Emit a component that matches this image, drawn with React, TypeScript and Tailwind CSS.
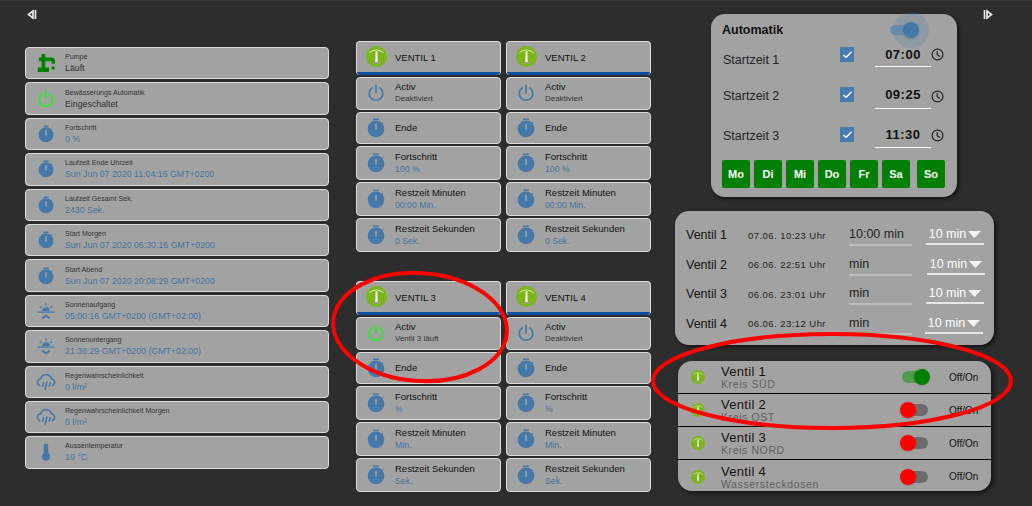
import type { ReactNode } from "react";

const BLUE = "#4378a8";

const TimerIcon = ({ size = 18 }: { size?: number }) => (
    <svg width={size} height={size} viewBox="0 0 24 24" fill={BLUE}>
        <path d="M8.500 0.500h7v2h-7z" />
        <path d="M19.200 7.600l1.400-1.400-1.500-1.500-1.400 1.400z" />
        <circle cx="12" cy="13" r="10" />
        <rect x="11" y="7" width="2" height="7" fill="#a2a2a2" />
    </svg>
);

const PowerIcon = ({ color = BLUE }: { color?: string }) => (
    <svg width="18" height="18" viewBox="0 0 24 24" fill="none" stroke={color} strokeWidth="2.200" strokeLinecap="round">
        <path d="M12 2v10" />
        <path d="M7 5.200a9 9 0 1 0 10 0" />
    </svg>
);

const PumpIcon = () => (
    <svg width="18" height="18" viewBox="0 0 24 24" fill="#008000">
        <path d="M6 0h5v4.500h8c3 0 5 2 5 4.500v4h-4.500v-3.500H11V18h5v6H1v-6h5V9.500H2.500v-5H6z" />
        <circle cx="21.500" cy="18.500" r="2.200" />
    </svg>
);

const SunIcon = ({ up }: { up: boolean }) => (
    <svg width="18" height="18" viewBox="0 0 24 24" fill="none" stroke={BLUE} strokeWidth="2">
        <path d="M7 12a5 5 0 0 1 10 0z" fill={BLUE} stroke="none" />
        <path d="M0.500 13.500h23" strokeWidth="1.800" />
        <path d="M12 1.500v3M3.500 6l3 2M20.500 6l-3 2" />
        <path d={up ? "M7 22l5-4 5 4" : "M7 18l5 4 5-4"} strokeWidth="2.400" />
    </svg>
);

const RainIcon = () => (
    <svg width="20" height="20" viewBox="0 0 24 24" fill="none" stroke={BLUE} strokeWidth="1.900" strokeLinecap="round">
        <path d="M4.500 16.500A4.500 4.500 0 0 1 5.500 8a7 7 0 0 1 13.200 0 4.500 4.500 0 0 1 1 8.500" />
        <path d="M9 13l-1 4M13 12l-2 9M17 13l-1 4" />
    </svg>
);

const ThermoIcon = () => (
    <svg width="18" height="18" viewBox="0 0 24 24" fill={BLUE}>
        <rect x="9" y="0.500" width="6" height="16" rx="3" />
        <circle cx="12" cy="18" r="5.500" />
    </svg>
);

// green sprinkler disc used for every valve
const ValveIcon = ({ size = 21 }: { size?: number }) => (
    <svg width={size} height={size} viewBox="0 0 24 24">
        <circle cx="12" cy="12" r="12" fill="#7cb518" />
        <path d="M11 6h2l.5 13h-3z" fill="#f4f4f4" />
        <path d="M4 7.500Q12 1.500 20 7.500" fill="none" stroke="#e8f2d0" strokeWidth="1" />
        <path d="M7.500 20l9-2M7.500 18l9 2" stroke="#9aa08c" strokeWidth="1" />
    </svg>
);

const ClockIcon = () => (
    <svg width="13" height="13" viewBox="0 0 24 24" fill="none" stroke="#222" strokeWidth="2.200">
        <circle cx="12" cy="12" r="10" />
        <path d="M11.500 6v6.500l5 3" />
    </svg>
);

const NavArrow = ({ right }: { right?: boolean }) => (
    <svg width="11" height="11" viewBox="0 0 11 11" fill="none" stroke="#e8e8e8" strokeWidth="1.700" className={right ? "rotate-180" : ""}>
        <path d="M9.500 1v9M7 2v7L2.500 5.500z" />
    </svg>
);

const CheckBox = () => (
    <div className="w-[14px] h-[15px] rounded-[1px] bg-[#4a7bae] flex items-center justify-center">
        <svg width="11" height="11" viewBox="0 0 24 24" fill="none" stroke="#fff" strokeWidth="3">
            <path d="M3 13l6 5L21 6" />
        </svg>
    </div>
);

type InfoRow = { icon: ReactNode; title: string; value: string; dark?: boolean };

const INFO_ROWS: InfoRow[] = [
    { icon: <PumpIcon />, title: "Pumpe", value: "Läuft", dark: true },
    { icon: <PowerIcon color="#22ee22" />, title: "Bewässerungs Automatik", value: "Eingeschaltet", dark: true },
    { icon: <TimerIcon />, title: "Fortschritt", value: "0 %" },
    { icon: <TimerIcon />, title: "Laufzeit Ende Uhrzeit", value: "Sun Jun 07 2020 11:04:16 GMT+0200" },
    { icon: <TimerIcon />, title: "Laufzeit Gesamt Sek.", value: "2430 Sek." },
    { icon: <TimerIcon />, title: "Start Morgen", value: "Sun Jun 07 2020 06:30:16 GMT+0200" },
    { icon: <TimerIcon />, title: "Start Abend", value: "Sun Jun 07 2020 20:08:29 GMT+0200" },
    { icon: <SunIcon up />, title: "Sonnenaufgang", value: "05:00:16 GMT+0200 (GMT+02:00)" },
    { icon: <SunIcon up={false} />, title: "Sonnenuntergang", value: "21:38:29 GMT+0200 (GMT+02:00)" },
    { icon: <RainIcon />, title: "Regenwahrscheinlichkeit", value: "0 l/m²" },
    { icon: <RainIcon />, title: "Regenwahrscheinlichkeit Morgen", value: "0 l/m²" },
    { icon: <ThermoIcon />, title: "Aussentemperatur", value: "19 °C" },
];

const Card = ({ className, children }: { className: string; children: ReactNode }) => (
    <div className={`bg-[#a2a2a2] border border-[#dcdcdc] rounded-[4px] flex items-center overflow-hidden ${className}`}>
        {children}
    </div>
);

const InfoCard = ({ row }: { row: InfoRow }) => (
    <Card className="h-[32.400px] shrink-0">
        <div className="w-[39px] flex justify-center shrink-0">{row.icon}</div>
        <div className="flex flex-col leading-[11px]">
            <span className="text-[7.100px] text-[#333]">{row.title}</span>
            <span className={`text-[8.800px] ${row.dark ? "text-[#2e2e2e]" : "text-[#44729f]"}`}>{row.value}</span>
        </div>
    </Card>
);

const ValveRow = ({ icon, title, sub, subDark, h }: { icon: ReactNode; title: string; sub?: string; subDark?: boolean; h: string }) => (
    <Card className={h}>
        <div className="w-[38px] flex justify-center shrink-0">{icon}</div>
        <div className="flex flex-col leading-[12px]">
            <span className="text-[9.500px] text-[#111]">{title}</span>
            {sub !== undefined && (
                <span className={subDark ? "text-[8px] text-[#333]" : "text-[8.700px] text-[#44729f]"}>{sub}</span>
            )}
        </div>
    </Card>
);

const ValveCol = ({ name, activ, running, progress, minutes, seconds }: { name: string; activ: string; running?: boolean; progress: string; minutes: string; seconds: string }) => (
    <div className="w-[145px] flex flex-col gap-[2px]">
        <Card className="h-[33.500px] relative border-b-0">
            <div className="w-[38px] flex justify-center shrink-0 mb-[3px]"><ValveIcon /></div>
            <span className="text-[9.500px] text-[#111]">{name}</span>
            <div className="absolute left-0 right-0 bottom-0 h-[3px] bg-[#0b4fa0]" />
        </Card>
        <ValveRow h="h-[33px]" icon={<PowerIcon color={running ? "#22ee22" : BLUE} />} title="Activ" sub={activ} subDark />
        <ValveRow h="h-[32.500px]" icon={<TimerIcon size={20} />} title="Ende" />
        <ValveRow h="h-[34px]" icon={<TimerIcon size={20} />} title="Fortschritt" sub={progress} />
        <ValveRow h="h-[34px]" icon={<TimerIcon size={20} />} title="Restzeit Minuten" sub={minutes} />
        <ValveRow h="h-[34px]" icon={<TimerIcon size={20} />} title="Restzeit Sekunden" sub={seconds} />
    </div>
);

const START_TIMES = [
    { label: "Startzeit 1", time: "07:00", row: "h-[40px]", text: "mt-[7px]", check: "mt-[1px]", clock: "mt-[2px]", field: "h-[21px] pb-[3px]" },
    { label: "Startzeit 2", time: "09:25", row: "h-[40px]", text: "mt-[3px]", check: "mt-[1px]", clock: "mt-[4px]", field: "h-[23px] pb-[4px]" },
    { label: "Startzeit 3", time: "11:30", row: "h-[34px]", text: "mt-[3px]", check: "mt-[1px]", clock: "mt-[3px]", field: "h-[22px] pb-[5px]" },
];

const DAYS = ["Mo", "Di", "Mi", "Do", "Fr", "Sa"];

const AutomatikPanel = () => (
    <div className="w-[247px] h-[183px] bg-[#a2a2a2] rounded-[14px] shadow-[2px_2px_4px_rgba(0,0,0,0.6)] px-[11px] pt-[8px] relative">
        <div className="flex items-center justify-between h-[16px]">
            <span className="text-[12.500px] font-bold text-[#111]">Automatik</span>
            <div className="relative w-[29px] h-[10px] mr-[27px] rounded-full bg-[#6d8fae]">
                <div className="absolute -right-[10px] -top-[13px] w-[36px] h-[36px] rounded-full bg-[#4378a8]/20" />
                <div className="absolute right-0 -top-[3px] w-[16px] h-[16px] rounded-full bg-[#4378a8] shadow" />
            </div>
        </div>
        <div className="mt-[8px] flex flex-col">
            {START_TIMES.map((s) => (
                <div key={s.label} className={`flex items-start ${s.row}`}>
                    <span className={`w-[118px] pl-[1px] text-[12.500px] leading-[14px] text-[#222] ${s.text}`}>{s.label}</span>
                    <div className={s.check}><CheckBox /></div>
                    <div className={`ml-[21px] w-[56px] border-b border-white text-center text-[13px] font-bold tracking-[0.5px] leading-[17px] text-[#111] ${s.field}`}>{s.time}</div>
                    <div className={s.clock}><ClockIcon /></div>
                </div>
            ))}
        </div>
        <div className="flex gap-[4px]">
            {DAYS.map((d) => (
                <div key={d} className="w-[28px] h-[28px] rounded-[2px] bg-[#008000] text-white text-[11px] font-bold flex items-center justify-center">{d}</div>
            ))}
            <div className="w-[28px] h-[28px] ml-[3px] rounded-[2px] bg-[#008000] text-white text-[11px] font-bold flex items-center justify-center">So</div>
        </div>
    </div>
);

const RUNTIMES = [
    { name: "Ventil 1", date: "07.06. 10:23 Uhr", time: "10:00 min", sel: "ml-[14px]" },
    { name: "Ventil 2", date: "06.06. 22:51 Uhr", time: "min", sel: "ml-[15px]" },
    { name: "Ventil 3", date: "06.06. 23:01 Uhr", time: "min", sel: "ml-[14px]" },
    { name: "Ventil 4", date: "06.06. 23:12 Uhr", time: "min", sel: "ml-[13px]" },
];

const RuntimePanel = () => (
    <div className="w-[319px] h-[134px] mt-[14px] bg-[#a2a2a2] rounded-[14px] shadow-[2px_2px_4px_rgba(0,0,0,0.6)] pl-[11px] pt-[10px] flex flex-col">
        {RUNTIMES.map((r) => (
            <div key={r.name} className="flex items-center h-[29.500px]">
                <span className="w-[62px] text-[12.500px] text-[#111]">{r.name}</span>
                <span className="w-[101px] text-[9.500px] tracking-[0.450px] text-[#222]">{r.date}</span>
                <div className="w-[63px] h-[21px] border-b-2 border-[#bdbdbd] text-[12.500px] leading-[19px] text-[#222]">{r.time}</div>
                <div className={`w-[58px] h-[19px] border-b-2 border-[#e6e6e6] flex items-center justify-center gap-[2px] text-[12.500px] text-white ${r.sel}`}>
                    10 min
                    <svg width="13" height="7" viewBox="0 0 13 7" fill="#f4f4f4"><path d="M0 0h13L6.500 7z" /></svg>
                </div>
            </div>
        ))}
    </div>
);

const CIRCUITS = [
    { name: "Ventil 1", sub: "Kreis SÜD", on: true },
    { name: "Ventil 2", sub: "Kreis OST", on: false },
    { name: "Ventil 3", sub: "Kreis NORD", on: false },
    { name: "Ventil 4", sub: "Wassersteckdosen", on: false },
];

const Toggle = ({ on }: { on: boolean }) => (
    <div className={`relative w-[26px] h-[12px] rounded-full ${on ? "bg-[#4f9a4f]" : "bg-[#6b6b6b]"}`}>
        <div className={`absolute -top-[2px] w-[16px] h-[16px] rounded-full shadow ${on ? "-right-[2px] bg-[#008000]" : "-left-[2px] bg-[#ff0000]"}`} />
    </div>
);

const CircuitPanel = () => (
    <div className="w-[313px] h-[130px] mt-[16px] ml-[3px] bg-[#a2a2a2] rounded-[14px] shadow-[2px_2px_4px_rgba(0,0,0,0.6)] flex flex-col overflow-hidden">
        {CIRCUITS.map((c, i) => (
            <div key={c.name} className={`flex items-center h-[33px] shrink-0 ${i < 3 ? "border-b border-black" : ""}`}>
                <div className="w-[43px] pl-[13px] shrink-0"><ValveIcon size={14} /></div>
                <div className="w-[181px] flex flex-col leading-[13px] mt-[2px]">
                    <span className="text-[13px] tracking-[0.3px] text-[#111]">{c.name}</span>
                    <span className="text-[10.500px] tracking-[0.6px] text-[#606060]">{c.sub}</span>
                </div>
                <Toggle on={c.on} />
                <span className="ml-[21px] text-[10px] text-[#111]">Off/On</span>
            </div>
        ))}
    </div>
);

export default function App() {
    return (
        <div className="relative w-[1032px] h-[506px] overflow-hidden bg-[#2d2d2d] font-['Liberation_Sans',Arial,sans-serif] flex border-t border-[#3a3a3a]">
            <div className="w-[304px] ml-[25px] shrink-0">
                <div className="h-[46px] pt-[8px] pl-[1px]"><NavArrow /></div>
                <div className="flex flex-col gap-[3px]">
                    {INFO_ROWS.map((row) => <InfoCard key={row.title} row={row} />)}
                </div>
            </div>

            <div className="ml-[27px] pt-[40px] w-[295px] shrink-0">
                <div className="flex gap-[5px]">
                    <ValveCol name="VENTIL 1" activ="Deaktiviert" progress="100 %" minutes="00:00 Min." seconds="0 Sek." />
                    <ValveCol name="VENTIL 2" activ="Deaktiviert" progress="100 %" minutes="00:00 Min." seconds="0 Sek." />
                </div>
                <div className="flex gap-[5px] mt-[29px]">
                    <ValveCol name="VENTIL 3" activ="Ventil 3 läuft" running progress="%" minutes="Min." seconds="Sek." />
                    <ValveCol name="VENTIL 4" activ="Deaktiviert" progress="%" minutes="Min." seconds="Sek." />
                </div>
            </div>

            <div className="ml-[24px] pt-[13px] w-[319px] shrink-0">
                <div className="flex items-start ml-[36px]">
                    <AutomatikPanel />
                    <div className="ml-[26px] -mt-[5px]"><NavArrow right /></div>
                </div>
                <RuntimePanel />
                <CircuitPanel />
            </div>

            {/* hand drawn red marks lying over the screenshot */}
            <svg className="absolute inset-0 pointer-events-none" width="1032" height="506" fill="none" stroke="#ff0000" strokeWidth="4">
                <ellipse cx="420" cy="326" rx="87" ry="54" transform="rotate(4 420 326)" />
                <ellipse cx="832" cy="380" rx="179" ry="47" />
            </svg>
        </div>
    );
}
